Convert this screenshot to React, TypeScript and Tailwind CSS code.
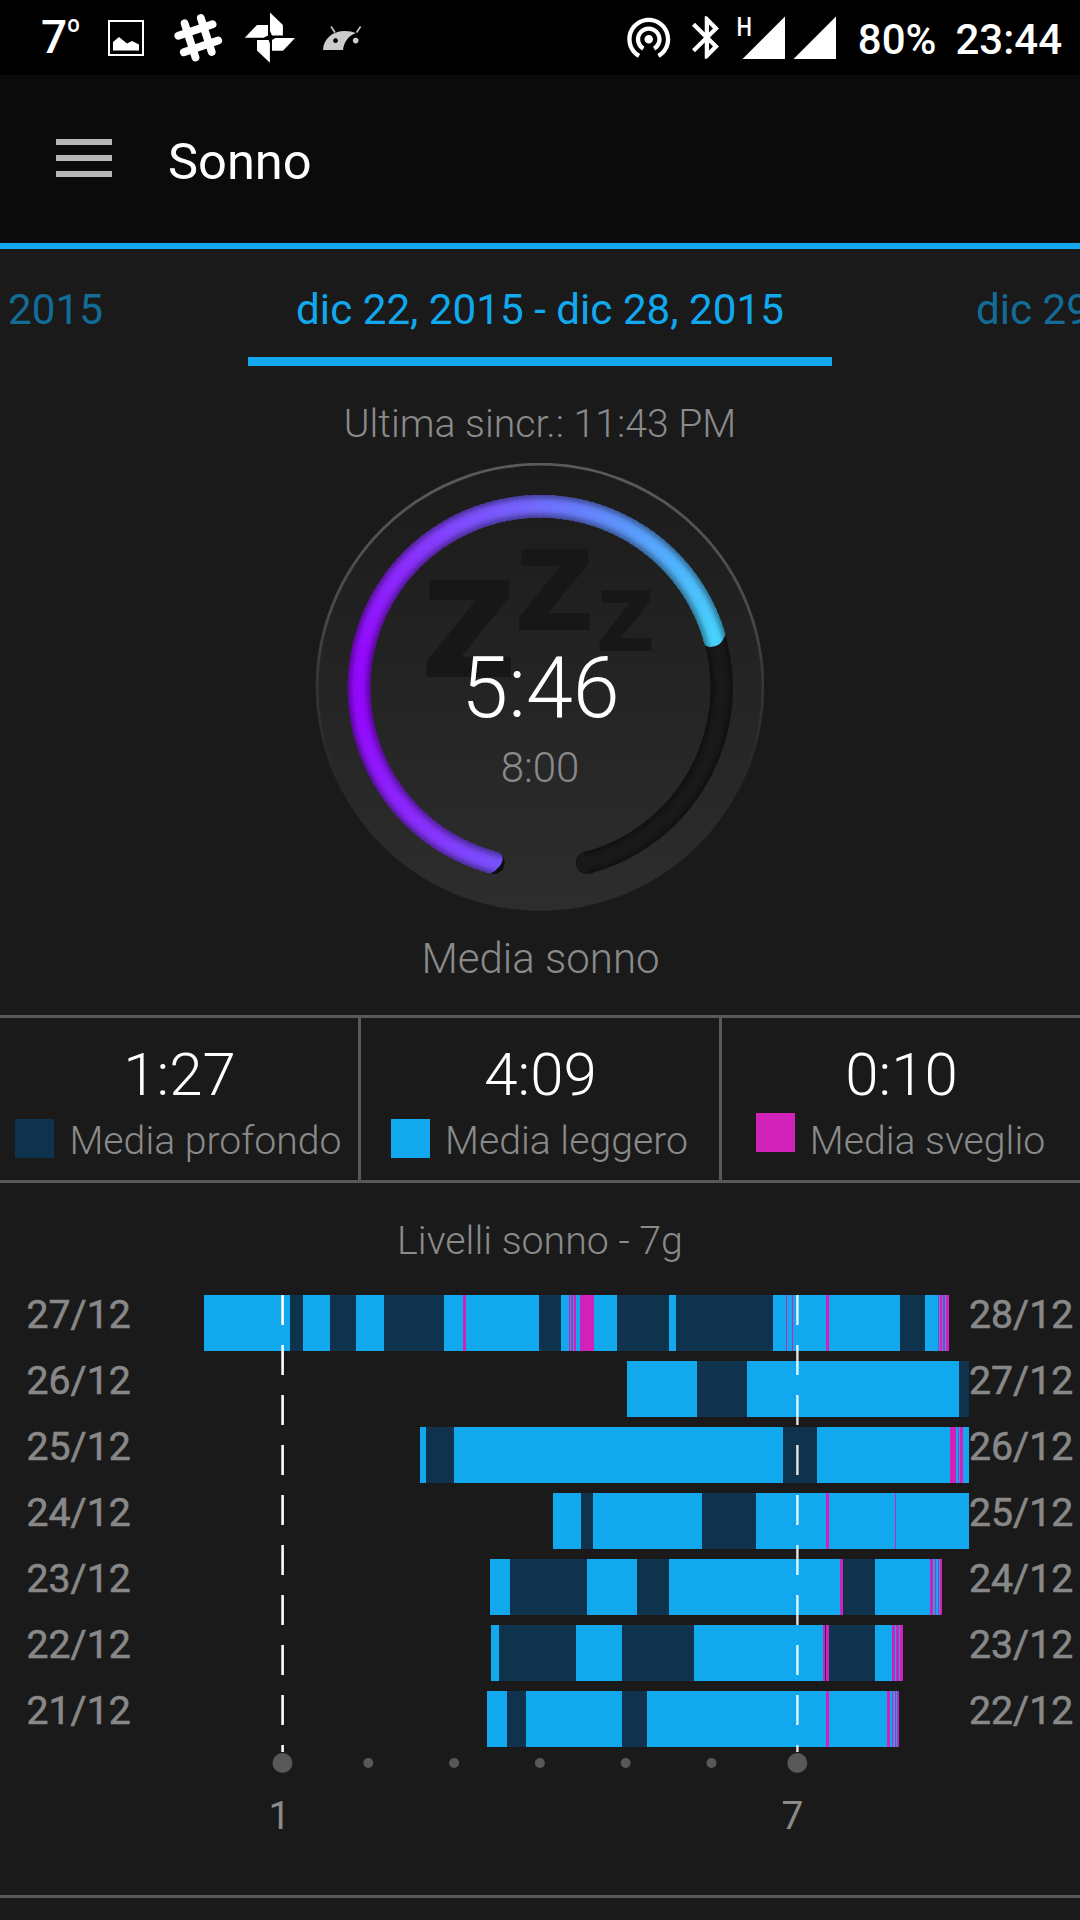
import React from "react";

type Kind = "light" | "deep" | "awake";

const KIND_CLASS: Record<Kind, string> = {
  light: "bg-[#11a8ee]",
  deep: "bg-[#0f334c]",
  awake: "bg-[#d022b8]",
};

const KINDS: Record<string, Kind> = { L: "light", D: "deep", A: "awake" };

interface Night {
  from: string;
  to: string;
  start: number;
  // Each entry is a sleep level and the position where it ends.
  levels: string;
}

const NIGHTS: Night[] = [
  {
    from: "27/12",
    to: "28/12",
    start: 204,
    levels:
      "L290 D303 L330 D356 L384 D444 L463 A466 L539 D561 L569 A570 L571 A573 L574 A576 L580 A594 L617 D669 L676 D773 L786 A787 L792 A793 L826 A829 L900 D925 L938 A939 L940 A942 L943 A945 L946 A949",
  },
  { from: "26/12", to: "27/12", start: 627, levels: "L697 D747 L959 D969" },
  { from: "25/12", to: "26/12", start: 420, levels: "L426 D454 L783 D817 L950 A956 L958 A959 L960 A963 L969" },
  { from: "24/12", to: "25/12", start: 553, levels: "L581 D593 L702 D756 L826 A829 L895 A896 L969" },
  {
    from: "23/12",
    to: "24/12",
    start: 490,
    levels: "L510 D587 L637 D669 L840 A843 D875 L930 A933 L935 A936 L938 A939 L940 A942",
  },
  {
    from: "22/12",
    to: "23/12",
    start: 491,
    levels: "L499 D576 L622 D694 L823 A825 D826 A829 D875 L892 A895 L896 A899 L900 A903",
  },
  {
    from: "21/12",
    to: "22/12",
    start: 487,
    levels: "L507 D526 L622 D647 L826 A829 L887 A890 L892 A893 L895 A896 L897 A899",
  },
];

function parseLevels(night: Night) {
  let previous = night.start;
  return night.levels.split(" ").map((item) => {
    const end = Number(item.slice(1));
    const width = end - previous;
    previous = end;
    return { kind: KINDS[item[0]], width };
  });
}

function StatusBar() {
  return (
    <div className="flex h-[75px] shrink-0 items-center bg-black pl-[41px] pr-[18px] text-white">
      <span className="flex w-[67px] items-start whitespace-nowrap pb-0.5 text-[46px] font-medium leading-none">
        7<span className="-ml-px pt-px text-[32px] font-normal leading-none">º</span>
      </span>
      <svg className="h-[75px] w-[36px]" viewBox="108 0 36 75">
        <path d="M109 21h34v34h-34z" fill="none" stroke="#fff" strokeWidth="2" />
        <path d="M113 50.5v-8.5l6-5 8 6.5 5-2.5 7 3.5v6z" fill="#fff" />
      </svg>
      <svg className="ml-[30px] h-[75px] w-[49px]" viewBox="174 0 49 75">
        <path
          d="M184.6 23.3L195.5 57.5M200.8 18L211.7 52M178.3 35.8L212.6 24.2M183.8 52.3L218.2 40.5"
          fill="none"
          stroke="#fff"
          strokeWidth="7.8"
          strokeLinecap="round"
        />
      </svg>
      <svg className="ml-[21px] h-[75px] w-[52px]" viewBox="244 0 52 75" fill="#fff">
        <path d="M270 12.5L282.9 25V35.5H272L270 31z" />
        <path d="M244.8 37.8L257 25H268V35.5L263.5 37.8z" />
        <path d="M257 40H268.6L269.9 43.5V62.8L257 50.5z" />
        <path d="M295 38L283 50.7H272V40L275.5 38z" />
      </svg>
      <svg className="ml-[27px] h-[75px] w-[39px]" viewBox="323 0 39 75">
        <path
          fillRule="evenodd"
          fill="#ccc"
          d="M323 50C323.5 39 332 31 345 31Q351 31 356 33C348 36 344 42 343 50zM335.5 38.2a2.4 2.4 0 1 0 .01 0z"
        />
        <circle cx="355.7" cy="40.6" r="2.8" fill="#ccc" />
        <path d="M331 26.5l4 6M360.6 26.5l-4 6" stroke="#ccc" strokeWidth="1.6" />
      </svg>

      <svg className="ml-auto h-[51.5px] w-[51.5px] shrink-0" viewBox="0 0 24 24" fill="#fff">
        <path
          transform="translate(0 -.3)"
          d="M12 11c-1.1 0-2 .9-2 2s.9 2 2 2 2-.9 2-2-.9-2-2-2zm6 2c0-3.31-2.69-6-6-6s-6 2.69-6 6c0 2.22 1.21 4.15 3 5.19l1-1.74c-1.19-.7-2-1.97-2-3.45 0-2.21 1.79-4 4-4s4 1.79 4 4c0 1.48-.81 2.75-2 3.45l1 1.74c1.79-1.04 3-2.97 3-5.19zM12 3C6.48 3 2 7.48 2 13c0 3.7 2.01 6.92 4.99 8.65l1-1.73C5.61 18.53 4 15.96 4 13c0-4.42 3.58-8 8-8s8 3.58 8 8c0 2.96-1.61 5.53-4 6.92l1 1.73c2.99-1.73 5-4.95 5-8.65 0-5.52-4.48-10-10-10z"
        />
      </svg>
      <svg className="ml-[17px] h-[43px] w-[27px] shrink-0" viewBox="5 2 12.71 20" fill="#fff">
        <path d="M17.71 7.71L12 2h-1v7.59L6.41 5 5 6.41 10.59 12 5 17.59 6.41 19 11 14.41V22h1l5.71-5.71-4.3-4.29 4.3-4.29zM13 5.83l1.88 1.88L13 9.59V5.83zm1.88 10.46L13 18.17v-3.76l1.88 1.88z" />
      </svg>
      <svg className="ml-[18px] h-[75px] w-[100px] shrink-0" viewBox="737 0 100 75" fill="#fff">
        <path d="M785 16.5V59H742.5zM836 16.5V59H793.5z" />
        <text x="736.6" y="35.5" fontSize="26" fontWeight="500" textLength="15.5" lengthAdjust="spacingAndGlyphs">
          H
        </text>
      </svg>
      <span className="ml-[21px] pt-1 text-[42px] font-medium leading-none">80%</span>
      <span className="ml-[19px] pt-1 text-[42px] font-medium leading-none">23:44</span>
    </div>
  );
}

function Header() {
  return (
    <header className="flex h-[174px] shrink-0 items-center border-b-6 border-[#11a8ee] bg-[#0b0b0b] pl-14">
      <div className="flex w-14 flex-col gap-2.5 pb-0.5">
        <span className="h-1.5 bg-[#b7b7b7]" />
        <span className="h-1.5 bg-[#b7b7b7]" />
        <span className="h-1.5 bg-[#b7b7b7]" />
      </div>
      <h1 className="ml-14 pt-1.5 text-[50.6px] leading-none text-white">Sonno</h1>
    </header>
  );
}

function WeekTabs() {
  return (
    <nav className="flex h-[117px] shrink-0 justify-between overflow-hidden whitespace-nowrap text-[42.2px] leading-none text-[#11a8ee]">
      <span className="w-[248px] pl-2 pt-10 text-[#126c97]">2015</span>
      <span className="w-[584px] border-b-9 border-[#11a8ee] pt-10 text-center">dic 22, 2015 - dic 28, 2015</span>
      <span className="w-[248px] pl-[144px] pt-10 text-[#126c97]">dic 29, 2015</span>
    </nav>
  );
}

const CX = 540.3;
const CY = 687.6;
const RADIUS = 181.3;

function point(angle: number, radius = RADIUS) {
  const rad = (angle * Math.PI) / 180;
  return [CX + radius * Math.sin(rad), CY - radius * Math.cos(rad)];
}

function arc(from: number, to: number) {
  const [x1, y1] = point(from);
  const [x2, y2] = point(to);
  return `M${x1} ${y1}A${RADIUS} ${RADIUS} 0 ${to - from > 180 ? 1 : 0} 1 ${x2} ${y2}`;
}

const SWEEP: [number, number[]][] = [
  [190, [118, 88, 255]],
  [225, [140, 42, 255]],
  [262, [149, 8, 255]],
  [280, [149, 8, 255]],
  [310, [140, 42, 255]],
  [340, [125, 82, 255]],
  [360, [113, 108, 255]],
  [390, [92, 155, 255]],
  [415, [78, 190, 255]],
  [436, [71, 214, 255]],
];

function sweepColor(angle: number) {
  const next = Math.max(1, SWEEP.findIndex(([stop]) => stop >= angle));
  const [a0, c0] = SWEEP[next - 1];
  const [a1, c1] = SWEEP[next];
  const t = (angle - a0) / (a1 - a0);
  return `rgb(${c0.map((v, i) => Math.round(v + (c1[i] - v) * t)).join(",")})`;
}

function capPath() {
  const [ax, ay] = point(194.2, 170);
  const [bx, by] = point(195, 192.6);
  const [cx, cy] = point(73.8, 192.6);
  const [dx, dy] = point(75.4, 170);
  const [ex, ey] = point(77.4, 175);
  const [fx, fy] = point(77.2, 187);
  const [gx, gy] = point(191.3, 172);
  const [hx, hy] = point(192, 184);
  return `M${ax} ${ay}C${gx} ${gy} ${hx} ${hy} ${bx} ${by}A192.6 192.6 0 1 1 ${cx} ${cy}C${fx} ${fy} ${ex} ${ey} ${dx} ${dy}A170 170 0 1 0 ${ax} ${ay}z`;
}

function SleepDial() {
  const slices = Array.from({ length: 124 }, (_, i) => 190 + i * 2);
  return (
    <svg className="ml-[315px] block h-[448px] w-[449px] shrink-0" viewBox="315 463 449 448">
      <defs>
        <linearGradient id="disc" x1="0" y1="0" x2="0" y2="1">
          <stop offset="0" stopColor="#1b1b1b" />
          <stop offset="1" stopColor="#2d2d2d" />
        </linearGradient>
        <linearGradient id="rim" x1="0" y1="0" x2="0" y2="1">
          <stop offset="0" stopColor="#5a5a5a" />
          <stop offset=".35" stopColor="#484848" />
          <stop offset=".75" stopColor="#333" stopOpacity="0" />
        </linearGradient>
        <radialGradient id="groove" gradientUnits="userSpaceOnUse" cx={CX} cy={CY} r="193">
          <stop offset=".88" stopColor="#000" stopOpacity=".4" />
          <stop offset=".915" stopColor="#000" stopOpacity=".05" />
          <stop offset=".94" stopColor="#000" stopOpacity="0" />
          <stop offset=".965" stopColor="#000" stopOpacity=".05" />
          <stop offset="1" stopColor="#000" stopOpacity=".42" />
        </radialGradient>
        <clipPath id="filled">
          <path d={capPath()} />
        </clipPath>
      </defs>
      <circle cx="540" cy="687" r="223.7" fill="url(#disc)" />
      <circle cx="540" cy="687.2" r="223" fill="none" stroke="url(#rim)" strokeWidth="2.8" />
      <g fill="#171717" fontFamily="'Open Sans'" fontWeight="700">
        <text transform="translate(421.5 676.5) scale(1.095 1)" fontSize="178.5">z</text>
        <text transform="translate(514.8 630.3) scale(1.095 1)" fontSize="149.5">z</text>
        <text transform="translate(596.5 651.3) scale(1.07 1)" fontSize="111.5">z</text>
      </g>
      <path d={arc(165, 165.01)} fill="none" stroke="#111" strokeWidth="22.5" strokeLinecap="round" />
      <path d={arc(195, 195.01)} fill="none" stroke="#0d0d0d" strokeWidth="22.5" strokeLinecap="round" />
      <path d={arc(60, 165)} fill="none" stroke="#191919" strokeWidth="21.5" strokeLinecap="round" />
      <path d={arc(60, 165)} fill="none" stroke="url(#groove)" strokeWidth="22.5" />
      <g clipPath="url(#filled)" fill="none" strokeWidth="24">
        {slices.map((angle) => (
          <path key={angle} d={arc(angle - 0.4, angle + 2.4)} stroke={sweepColor(Math.min(436, angle + 1))} />
        ))}
        <circle cx={CX} cy={CY} r={RADIUS} stroke="url(#groove)" />
      </g>
      <text x="540.5" y="717" textAnchor="middle" fontSize="84.5" fontWeight="300" fill="#fff">
        5:46
      </text>
      <text x="540" y="782" textAnchor="middle" fontSize="42" fontWeight="300" fill="#8a8a8a">
        8:00
      </text>
    </svg>
  );
}

function Stat({ value, label, swatch }: { value: string; label: string; swatch: string }) {
  return (
    <div className="flex flex-1 flex-col items-center pt-[27px]">
      <span className="pl-px text-[60px] font-light leading-none text-white">{value}</span>
      <div className="mt-[14px] flex gap-[15px] whitespace-nowrap pr-px">
        <span className={`size-[39px] ${swatch}`} />
        <span className="pt-[3px] text-[39.2px] font-light leading-[39px] text-[#8a8a8a]">{label}</span>
      </div>
    </div>
  );
}

function Stats() {
  return (
    <section className="flex h-[168px] shrink-0 divide-x-3 divide-[#585858] border-y-3 border-[#585858]">
      <Stat value="1:27" label="Media profondo" swatch="mt-0 bg-[#0f334c]" />
      <Stat value="4:09" label="Media leggero" swatch="mt-0 bg-[#11a8ee]" />
      <Stat value="0:10" label="Media sveglio" swatch="-mt-1.5 bg-[#d022b8]" />
    </section>
  );
}

function LevelsChart() {
  return (
    <div className="relative flex flex-col gap-2.5">
      {NIGHTS.map((night) => (
        <div
          key={night.from}
          className="flex h-14 text-[39.2px] leading-none text-[#888] [-webkit-text-stroke:0.6px_#888]"
        >
          <span className="w-[178px] pl-[26.5px] pt-px">{night.from}</span>
          <div className="flex w-[791px]" style={{ paddingLeft: night.start - 178 }}>
            {parseLevels(night).map((level, i) => (
              <div key={i} className={KIND_CLASS[level.kind]} style={{ width: level.width }} />
            ))}
          </div>
          <span className="pt-px">{night.to}</span>
        </div>
      ))}
      <svg className="absolute left-0 top-0 h-[560px] w-[1080px]" viewBox="0 0 1080 560">
        <g stroke="#fff" strokeDasharray="30 20">
          <path d="M282.6 0V457" strokeWidth="2.6" />
          <path d="M797.4 0V457" strokeWidth="2.4" strokeOpacity=".88" />
        </g>
        <g fill="#585858">
          {[0, 1, 2, 3, 4, 5, 6].map((hour) => (
            <circle key={hour} cx={282.5 + hour * 85.8} cy="468" r={hour % 6 === 0 ? 10 : 5} />
          ))}
        </g>
        <g fill="#8a8a8a" fontSize="39">
          <text x="268.5" y="534">1</text>
          <text x="781.5" y="534">7</text>
        </g>
      </svg>
    </div>
  );
}

export default function App() {
  return (
    <div className="flex h-[1920px] w-[1080px] flex-col overflow-hidden bg-[#1a1a1a] font-['Roboto',sans-serif]">
      <StatusBar />
      <Header />
      <WeekTabs />
      <p className="h-[97px] shrink-0 pt-[39px] text-center text-[39.2px] font-light leading-none text-[#8a8a8a]">
        Ultima sincr.: 11:43 PM
      </p>
      <SleepDial />
      <p className="h-[104px] shrink-0 pl-px pt-[27px] text-center text-[42px] font-light leading-none text-[#8a8a8a]">
        Media sonno
      </p>
      <Stats />
      <section className="flex h-[712px] shrink-0 flex-col">
        <h2 className="h-[112px] shrink-0 pt-[39px] text-center text-[39.3px] font-light leading-none text-[#8a8a8a]">
          Livelli sonno - 7g
        </h2>
        <LevelsChart />
      </section>
      <div className="h-[3px] shrink-0 bg-[#585858]" />
    </div>
  );
}
